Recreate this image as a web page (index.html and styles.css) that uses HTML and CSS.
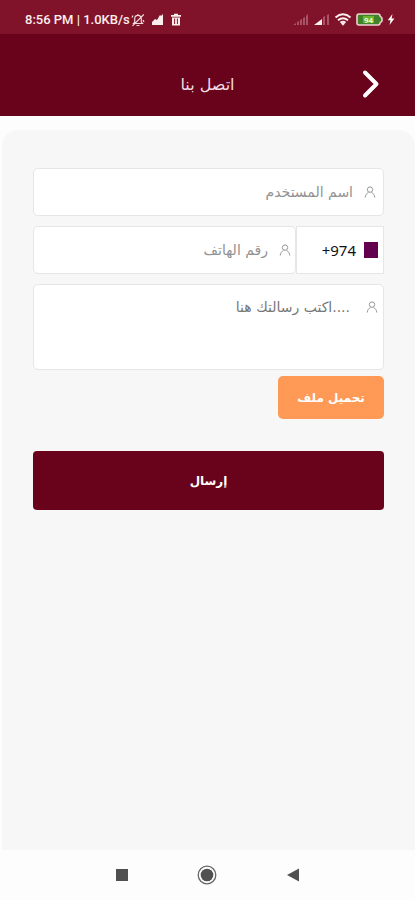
FILE: index.html
```html
<!DOCTYPE html>
<html lang="ar" dir="rtl">
<head>
<meta charset="utf-8">
<meta name="viewport" content="width=device-width, initial-scale=1">
<title>اتصل بنا</title>
<link rel="stylesheet" href="styles.css">
</head>
<body>
<svg class="defs" aria-hidden="true">
  <symbol id="person" viewBox="0 0 12 12"><circle cx="6" cy="3.600" r="2.700"/><path d="M1.200 11.500C1.500 9 2.700 7.300 4.500 6.500M10.800 11.500C10.500 9 9.300 7.300 7.500 6.500"/></symbol>
</svg>
<div class="status" dir="ltr">
  <div class="status-group">
    <span>8:56 PM | 1.0KB/s</span>
    <svg class="bell" width="14" height="14" viewBox="0 0 14 14"><path d="M2.5 10.5h9L10.3 9V5.8C10.3 3.7 9 2.4 7 2.4S3.700 3.700 3.700 5.800V9zM5.500 12.500h3M7 1v1.400M1.500 12.800L12.800 1.500M1 4.500l1-2M12 7l1 2" fill="none" stroke="#f3d9dd" stroke-width="1.200"/></svg>
    <svg class="gap" width="13" height="13" viewBox="0 0 13 13"><path d="M1 12V9l3-3 2 1 3-5 1 1 2-2v11z" fill="#fbeeee"/></svg>
    <svg class="gap" width="12" height="13" viewBox="0 0 12 13"><path d="M1 2h3V.8h4V2h3v1.700H1zM2 4.500h8V12.500H2z" fill="#fbeeee"/><path d="M4.600 5.500v5.500M7.400 5.500v5.500" stroke="#8a1a2e"/></svg>
  </div>
  <div class="status-group signals">
    <svg width="17" height="12" viewBox="0 0 17 12"><path d="M1 11l3-2v2zM5 11V8l2-1v4zM8 11V6l2-1v6zM11 11V4l2-1v8zM14 11V2l2-2v11z" fill="#a85466"/></svg>
    <svg width="17" height="12" viewBox="0 0 17 12"><path d="M10 11V3l2-1v9zM14 11V1l2-1v11z" fill="#a85466"/><path d="M1 11l8-6v6z" fill="#fbeeee"/></svg>
    <svg width="18" height="13" viewBox="0 0 18 13"><path d="M1.500 4.500Q9-1.800 16.500 4.500M4 7.300Q9 3 14 7.300M6.500 9.800Q9 7.500 11.500 9.800" fill="none" stroke="#fbeeee" stroke-width="1.900"/><path d="M9 12.800l-2-2.300q2-1.500 4 0z" fill="#fbeeee"/></svg>
    <svg width="27" height="13" viewBox="0 0 27 13"><path d="M3 1h19q2 0 2 2l2 2v3l-2 2q0 2-2 2H3q-2 0-2-2V3q0-2 2-2z" fill="#40822a" stroke="#f3cdd0" stroke-width="1.600"/><path d="M7 3h11v7H7z" fill="#69b62d"/><text class="level" x="12.500" y="9.500" text-anchor="middle">94</text></svg>
    <svg width="8" height="13" viewBox="0 0 8 13"><path d="M5.500 1L.8 7.300h2.700L2.500 12l4.900-6.500H4.600z" fill="#fff"/></svg>
  </div>
</div>
<header class="header">
  <h1>اتصل بنا</h1>
  <button class="back" type="button" aria-label="رجوع"><svg width="20" height="30" viewBox="0 0 20 30"><path d="M4 3.500L15.500 15 4 26.500" fill="none" stroke="#fff" stroke-width="4" stroke-linecap="round" stroke-linejoin="round"/></svg></button>
</header>
<main class="panel">
  <form class="form">
    <div class="field">
      <label for="name" aria-label="اسم المستخدم"><svg class="person"><use href="#person"/></svg></label>
      <input id="name" type="text" placeholder="اسم المستخدم">
    </div>
    <div class="phone">
      <button class="code" type="button"><span class="flag"></span><span dir="ltr">+974</span></button>
      <div class="field">
        <label for="phone" aria-label="رقم الهاتف"><svg class="person"><use href="#person"/></svg></label>
        <input id="phone" type="tel" dir="rtl" placeholder="رقم الهاتف">
      </div>
    </div>
    <div class="field message">
      <label for="message" aria-label="الرسالة"><svg class="person"><use href="#person"/></svg></label>
      <textarea id="message" placeholder="....اكتب رسالتك هنا"></textarea>
    </div>
    <button class="upload" type="button">تحميل ملف</button>
    <button class="send" type="submit">إرسال</button>
  </form>
</main>
<nav class="nav" dir="ltr">
  <button type="button" aria-label="التطبيقات"><svg viewBox="0 0 20 20"><path d="M4 4h12v12H4z" fill="#505050"/></svg></button>
  <button type="button" aria-label="الرئيسية"><svg viewBox="0 0 20 20"><circle cx="10" cy="10" r="8.800" fill="none" stroke="#666" stroke-width="1.300"/><circle cx="10" cy="10" r="6.300" fill="#505050"/></svg></button>
  <button type="button" aria-label="رجوع"><svg viewBox="0 0 20 20"><path d="M16 3.500v13L4 10z" fill="#505050"/></svg></button>
</nav>
</body>
</html>
```
FILE: styles.css
```css
* { box-sizing: border-box; }
body {
  margin: 0;
  min-height: 100vh;
  display: flex;
  flex-direction: column;
  background: #fdfdfd;
  font-family: "DejaVu Sans", sans-serif;
  font-size: 14px;
}
button, input, textarea { font: inherit; margin: 0; border: 0; }
button { cursor: pointer; }
svg { display: block; flex: none; }
.defs { position: absolute; width: 0; height: 0; }

.status {
  height: 34px;
  padding: 5px 20px 0 25px;
  display: flex;
  justify-content: space-between;
  align-items: center;
  background: #80132a;
  color: #fbeeee;
  font: 500 13px Roboto, sans-serif;
}
.status-group { display: flex; align-items: center; }
.bell { margin-left: 1px; }
.gap { margin-left: 6px; }
.signals { gap: 4px; }
.level { font: bold 8px Roboto, sans-serif; fill: #e9f8d8; }

.header {
  height: 82px;
  padding: 18px 30px 0;
  display: grid;
  grid-template-columns: 28px 1fr 28px;
  align-items: center;
  background: #68031b;
  color: #f1dfe3;
}
.header h1 { grid-column: 2; grid-row: 1; margin: 0; font-size: 16px; font-weight: 400; text-align: center; }
.back { grid-column: 1; grid-row: 1; padding: 0; background: none; display: flex; justify-content: center; }

.panel {
  flex: 1;
  margin: 14px 0 0 2px;
  padding: 38px 31px;
  background: #f7f7f7;
  border-radius: 16px 16px 0 0;
}
.form { display: flex; flex-direction: column; }
.field {
  flex: 1;
  min-width: 0;
  height: 48px;
  padding: 0 7px;
  display: flex;
  align-items: center;
  gap: 11px;
  background: #fff;
  border: 1px solid #e6e6e6;
  border-radius: 5px;
}
.form > .field { flex: none; }
.person { width: 12px; height: 12px; fill: none; stroke: #969696; }
.field input, .field textarea {
  flex: 1;
  min-width: 0;
  padding: 0;
  background: none;
  color: #222;
  outline: 0;
}
::placeholder { color: #929292; opacity: 1; }
.phone { margin: 10px 0; display: flex; }
.phone .field { padding: 0 4px; }
.code {
  width: 88px;
  padding: 0 5px;
  display: flex;
  align-items: center;
  gap: 8px;
  background: #fff;
  border: 1px solid #e6e6e6;
  color: #111;
  font-family: "Noto Sans", sans-serif;
  font-size: 15px;
}
.flag { width: 14px; height: 16px; background: #62004f; }
.form > .message { height: 86px; padding: 14px 5px 0; align-items: flex-start; gap: 16px; }
.message label { padding-top: 2px; }
.message textarea { height: 64px; resize: none; }
.message ::placeholder { color: #777; }
.upload {
  width: 106px;
  height: 43px;
  margin-top: 6px;
  background: #ff9a56;
  border-radius: 5px;
  color: #fff;
  font-size: 12px;
  font-weight: 700;
}
.send {
  height: 59px;
  margin-top: 32px;
  background: #68031b;
  border-radius: 4px;
  color: #fff;
  font-size: 12px;
  font-weight: 700;
}

.nav {
  height: 50px;
  padding: 0 79px;
  display: flex;
  justify-content: space-around;
  align-items: center;
}
.nav button { padding: 0; background: none; }
.nav svg { width: 20px; height: 20px; }
```
